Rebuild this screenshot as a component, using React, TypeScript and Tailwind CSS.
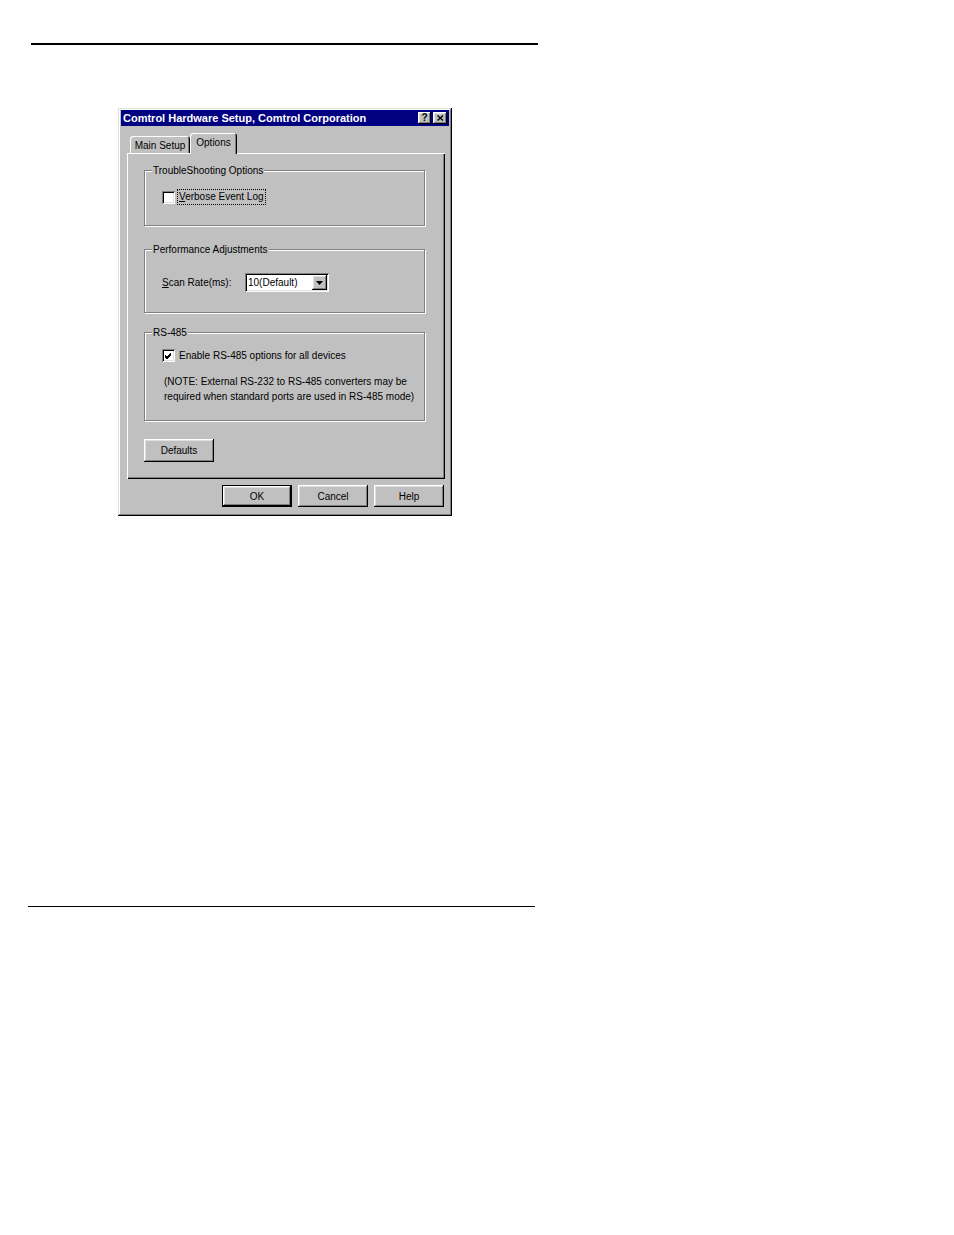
import React from 'react';

const raised =
  'bg-[#c0c0c0] shadow-[inset_-1px_-1px_#000,inset_1px_1px_#fff,inset_-2px_-2px_#808080,inset_2px_2px_#dfdfdf]';
const sunken =
  'bg-white shadow-[inset_1px_1px_#808080,inset_-1px_-1px_#fff,inset_2px_2px_#000,inset_-2px_-2px_#dfdfdf]';
const etched =
  'relative border border-[#808080] shadow-[1px_1px_0_#fff,inset_1px_1px_0_#fff]';

function GroupBox({
  label,
  className,
  children,
}: {
  label: string;
  className: string;
  children: React.ReactNode;
}) {
  return (
    <div className={`${etched} w-[281px] ${className}`}>
      <span className="absolute left-[7px] top-[-7px] bg-[#c0c0c0] px-[1px] leading-[13px]">
        {label}
      </span>
      {children}
    </div>
  );
}

function CheckBox({ checked }: { checked?: boolean }) {
  return (
    <div className={`${sunken} w-[13px] h-[13px] flex items-center justify-center shrink-0`}>
      {checked && (
        <svg width="9" height="9" viewBox="0 0 9 9">
          <path d="M1 4 L3 6 L7 2 M1 5 L3 7 L7 3 M1 6 L3 8 L7 4" stroke="#000" strokeWidth="1" fill="none" />
        </svg>
      )}
    </div>
  );
}

function Button({ label, isDefault }: { label: string; isDefault?: boolean }) {
  if (isDefault) {
    return (
      <div className="w-[70px] h-[22px] bg-black p-px">
        <div className={`${raised} w-full h-full flex items-center justify-center`}>{label}</div>
      </div>
    );
  }
  return <div className={`${raised} w-[70px] h-[22px] flex items-center justify-center`}>{label}</div>;
}

export default function App() {
  return (
    <div
      className="bg-white min-h-[1235px] pt-[43px] text-[10px] text-black"
      style={{ fontFamily: '"Liberation Sans", Arial, sans-serif' }}
    >
      <div className="ml-[31px] w-[507px] h-[2px] bg-black" />

      {/* dialog */}
      <div className="mt-[63px] ml-[118px] w-[334px] h-[408px] p-[2px] pb-[3px] pr-[3px] bg-[#c0c0c0] shadow-[inset_-1px_-1px_#000,inset_1px_1px_#dfdfdf,inset_-2px_-2px_#808080,inset_2px_2px_#fff] flex flex-col">
        {/* title bar */}
        <div className="h-[16px] ml-px bg-[#000080] flex items-center justify-between pl-[2px] pr-[2px]">
          <span className="text-white font-bold text-[11px] leading-[15px] whitespace-nowrap">
            Comtrol Hardware Setup, Comtrol Corporation
          </span>
          <div className="flex gap-[2px]">
            <div className={`${raised} w-[13px] h-[12px] flex items-center justify-center font-bold text-[10px] leading-none`}>
              ?
            </div>
            <div className={`${raised} w-[14px] h-[12px] flex items-center justify-center`}>
              <svg width="7" height="6" viewBox="0 0 7 6">
                <path d="M0.5 0.5 L6 5.5 M6 0.5 L0.5 5.5" stroke="#000" strokeWidth="1.4" />
              </svg>
            </div>
          </div>
        </div>

        <div className="pl-[7px] pr-[4px] pt-[7px] flex flex-col">
          {/* tabs */}
          <div className="flex items-end h-[20px] pl-[3px]">
            <div className="h-[17px] w-[60px] rounded-t-[3px] shadow-[inset_1px_1px_#fff,inset_-1px_0_#000,inset_-2px_0_#808080] flex items-center justify-center leading-none pt-[2px]">
              Main Setup
            </div>
            <div className="relative z-10 -mb-px h-[21px] w-[47px] bg-[#c0c0c0] rounded-t-[3px] shadow-[inset_1px_1px_#fff,inset_-1px_0_#000,inset_-2px_0_#808080] flex items-start justify-center pt-[5px] leading-none">
              Options
            </div>
          </div>

          {/* panel */}
          <div className="h-[326px] w-[318px] shadow-[inset_1px_1px_#fff,inset_-1px_-1px_#000,inset_-2px_-2px_#808080] pt-[17px] pl-[17px] flex flex-col">
            <GroupBox label="TroubleShooting Options" className="h-[56px]">
              <div className="flex items-center pt-[19px] pl-[17px] gap-[3px]">
                <CheckBox />
                <span className="outline outline-1 outline-dotted outline-black px-[1px] leading-[14px]">
                  <u>V</u>erbose Event Log
                </span>
              </div>
            </GroupBox>

            <GroupBox label="Performance Adjustments" className="h-[64px] mt-[23px]">
              <div className="flex items-center pt-[23px] pl-[17px]">
                <span className="w-[83px]">
                  <u>S</u>can Rate(ms):
                </span>
                <div className={`${sunken} w-[84px] h-[19px] flex items-center justify-between pl-[3px] pr-[2px]`}>
                  <span>10(Default)</span>
                  <div className={`${raised} w-[15px] h-[15px] flex items-center justify-center`}>
                    <svg width="7" height="4" viewBox="0 0 7 4">
                      <path d="M0 0 H7 L3.5 4 Z" fill="#000" />
                    </svg>
                  </div>
                </div>
              </div>
            </GroupBox>

            <GroupBox label="RS-485" className="h-[89px] mt-[19px]">
              <div className="flex items-center pt-[15px] pl-[17px] gap-[4px]">
                <CheckBox checked />
                <span>Enable RS-485 options for all devices</span>
              </div>
              <div className="pl-[19px] pt-[11px] leading-[15px] whitespace-nowrap">
                (NOTE: External RS-232 to RS-485 converters may be
                <br />
                required when standard ports are used in RS-485 mode)
              </div>
            </GroupBox>

            <div className={`${raised} mt-[18px] w-[70px] h-[23px] flex items-center justify-center`}>
              Defaults
            </div>
          </div>

          {/* bottom buttons */}
          <div className="flex justify-end gap-[6px] mt-[6px] pr-[1px]">
            <Button label="OK" isDefault />
            <Button label="Cancel" />
            <Button label="Help" />
          </div>
        </div>
      </div>

      <div className="mt-[390px] ml-[28px] w-[507px] h-px bg-black" />
    </div>
  );
}
